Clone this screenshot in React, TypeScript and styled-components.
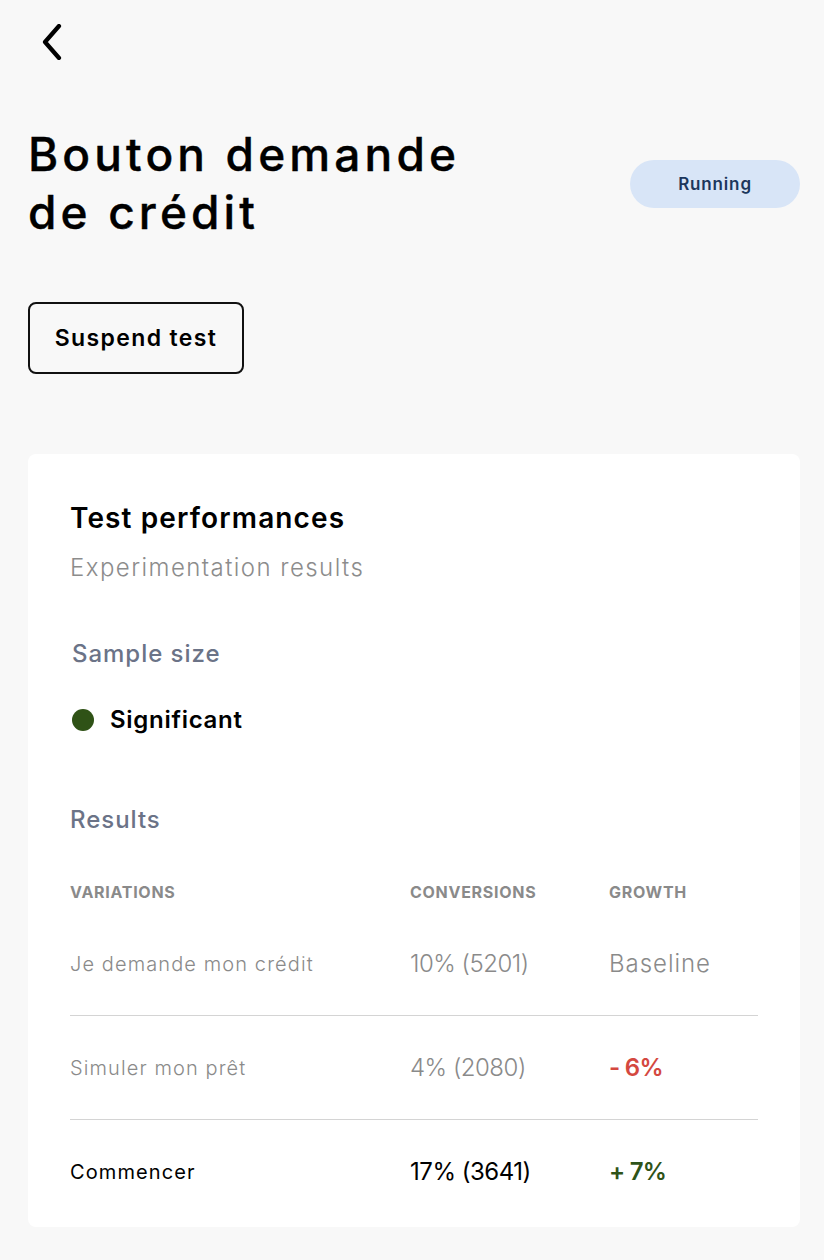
import React from 'react';
import styled, { createGlobalStyle } from 'styled-components';

const GlobalStyle = createGlobalStyle`
  body {
    margin: 0;
    background: #f8f8f8;
    font-family: Inter, 'Noto Sans', sans-serif;
    color: #000;
  }
`;

const Page = styled.div`
  padding: 24px 24px 33px 28px;
`;

const BackButton = styled.button`
  display: block;
  width: 36px;
  height: 36px;
  padding: 0;
  margin-left: 5px;
  border: none;
  background: none;
  cursor: pointer;
`;

const Header = styled.div`
  display: flex;
  align-items: center;
  justify-content: space-between;
  margin-top: 65px;
`;

const Title = styled.h1`
  margin: 0;
  width: 500px;
  font-size: 46px;
  line-height: 58px;
  font-weight: 500;
  letter-spacing: 0.09em;
  -webkit-text-stroke: 0.4px #000;
`;

const StatusPill = styled.span`
  display: flex;
  align-items: center;
  justify-content: center;
  width: 170px;
  height: 48px;
  margin-top: 2px;
  border-radius: 24px;
  background: #d8e5f7;
  color: #1c365c;
  font-size: 17px;
  font-weight: 600;
  letter-spacing: 0.05em;
`;

const OutlineButton = styled.button`
  display: block;
  margin-top: 61px;
  width: 216px;
  height: 72px;
  border: 2px solid #111;
  border-radius: 8px;
  background: transparent;
  font-family: inherit;
  font-size: 23px;
  font-weight: 600;
  color: #000;
  letter-spacing: 0.06em;
`;

const Card = styled.section`
  margin-top: 80px;
  background: #fff;
  border-radius: 8px;
  padding: 46px 42px 4px;
`;

const CardTitle = styled.h2`
  margin: 0;
  font-size: 28px;
  line-height: 36px;
  font-weight: 600;
  letter-spacing: 0.04em;
`;

const CardSubtitle = styled.p`
  margin: 16px 0 0;
  font-size: 24px;
  line-height: 32px;
  font-weight: 300;
  color: #8c8c8c;
  letter-spacing: 0.06em;
`;

const SectionLabel = styled.h3<{ $gap: number; $indent?: boolean }>`
  margin: ${(p) => p.$gap}px 0 0;
  padding-left: ${(p) => (p.$indent ? 2 : 0)}px;
  font-size: 24px;
  line-height: 32px;
  font-weight: 500;
  color: #6b7387;
  letter-spacing: 0.04em;
`;

const Indicator = styled.div`
  display: flex;
  align-items: center;
  gap: 16px;
  margin-top: 34px;
  padding-left: 2px;
  font-size: 24px;
  line-height: 32px;
  font-weight: 600;
  letter-spacing: 0.03em;
`;

const Dot = styled.span<{ $color: string }>`
  width: 22px;
  height: 22px;
  border-radius: 50%;
  background: ${(p) => p.$color};
`;

const Table = styled.div`
  margin-top: 36px;
`;

const Row = styled.div<{ $head?: boolean; $divider?: boolean }>`
  display: grid;
  grid-template-columns: 340px 199px 1fr;
  align-items: center;
  height: ${(p) => (p.$head ? 40 : 103)}px;
  border-top: ${(p) => (p.$divider ? '1px solid #d4d4d4' : 'none')};
`;

const HeadCell = styled.div`
  font-size: 16px;
  font-weight: 700;
  color: #8a8a8a;
  letter-spacing: 0.045em;
`;

const NameCell = styled.div<{ $active?: boolean }>`
  font-size: 20px;
  font-weight: ${(p) => (p.$active ? 400 : 300)};
  color: ${(p) => (p.$active ? '#000' : '#8a8a8a')};
  letter-spacing: 0.055em;
`;

const ValueCell = styled.div<{ $active?: boolean }>`
  font-size: 24px;
  font-weight: ${(p) => (p.$active ? 400 : 300)};
  color: ${(p) => (p.$active ? '#000' : '#8a8a8a')};
  letter-spacing: -0.02em;
`;

const GrowthCell = styled.div<{ $tone: 'neutral' | 'down' | 'up' }>`
  font-size: 24px;
  font-weight: ${(p) => (p.$tone === 'neutral' ? 300 : 600)};
  letter-spacing: ${(p) => (p.$tone === 'neutral' ? '0.04em' : '-0.03em')};
  color: ${(p) =>
    p.$tone === 'down' ? '#d4483f' : p.$tone === 'up' ? '#2f5318' : '#8a8a8a'};
`;

const rows = [
  { name: 'Je demande mon crédit', value: '10% (5201)', growth: 'Baseline', tone: 'neutral' as const },
  { name: 'Simuler mon prêt', value: '4% (2080)', growth: '- 6%', tone: 'down' as const },
  { name: 'Commencer', value: '17% (3641)', growth: '+ 7%', tone: 'up' as const, active: true },
];

const App: React.FC = () => {
  return (
    <Page>
      <GlobalStyle />
      <BackButton aria-label="Back">
        <svg width="26" height="36" viewBox="0 0 26 36" fill="none">
          <path
            d="M21 2 L7 18 L21 34"
            stroke="#000"
            strokeWidth="4.2"
            strokeLinecap="round"
            strokeLinejoin="round"
          />
        </svg>
      </BackButton>

      <Header>
        <Title>Bouton demande de crédit</Title>
        <StatusPill>Running</StatusPill>
      </Header>

      <OutlineButton>Suspend test</OutlineButton>

      <Card>
        <CardTitle>Test performances</CardTitle>
        <CardSubtitle>Experimentation results</CardSubtitle>

        <SectionLabel $gap={54} $indent>
          Sample size
        </SectionLabel>
        <Indicator>
          <Dot $color="#2f5216" />
          Significant
        </Indicator>

        <SectionLabel $gap={68}>Results</SectionLabel>

        <Table>
          <Row $head>
            <HeadCell>VARIATIONS</HeadCell>
            <HeadCell>CONVERSIONS</HeadCell>
            <HeadCell>GROWTH</HeadCell>
          </Row>
          {rows.map((r, i) => (
            <Row key={r.name} $divider={i > 0}>
              <NameCell $active={r.active}>{r.name}</NameCell>
              <ValueCell $active={r.active}>{r.value}</ValueCell>
              <GrowthCell $tone={r.tone}>{r.growth}</GrowthCell>
            </Row>
          ))}
        </Table>
      </Card>
    </Page>
  );
};

export default App;
